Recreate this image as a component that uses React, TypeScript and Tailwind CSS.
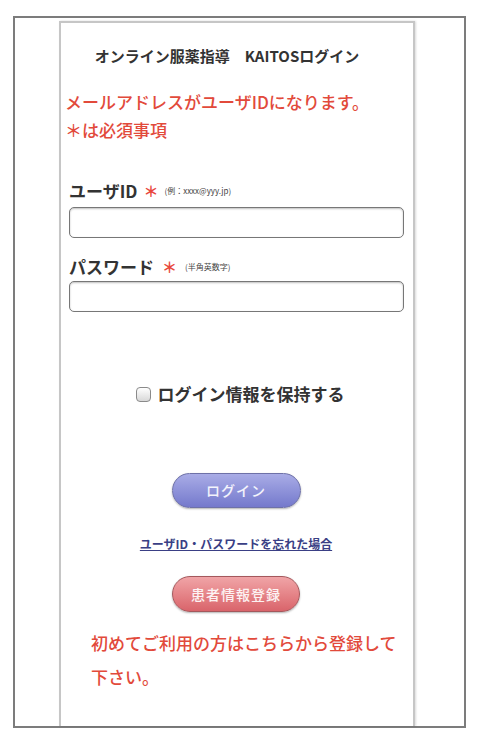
export default function App() {
  return (
    <div
      className="w-[479px] h-[739px] bg-white pt-[16px] px-[13px]"
      style={{ fontFamily: '"Noto Sans CJK JP", "Noto Sans", sans-serif' }}
    >
      <div className="h-[712px] border-2 border-[#7c7c7c] flex pl-[44px]">
        <div className="mt-[3px] w-[356px] border-2 border-b-0 border-[#c6c6c6] shadow-[1px_0_2px_rgba(0,0,0,0.15)] flex flex-col">
          <h1 className="mt-[23px] pr-[20px] text-center text-[15px] leading-[20px] font-bold text-[#333]">
            オンライン服薬指導　KAITOSログイン
          </h1>

          <div className="mt-[22px] pl-[4px] text-[17px] leading-[28px] font-medium text-[#e24a3b]">
            <p>メールアドレスがユーザIDになります。</p>
            <p>＊は必須事項</p>
          </div>

          <div className="px-[8px]">
            <label className="mt-[37px] flex items-center gap-[6px] leading-[20px]">
              <span className="text-[17px] font-bold text-[#333]">ユーザID</span>
              <span className="text-[15px] font-bold text-[#e8473c]">＊</span>
              <span className="text-[8px] text-[#444]">(例：xxxx@yyy.jp)</span>
            </label>
            <input className="mt-[6px] block w-[335px] h-[31px] rounded-[5px] border border-[#777] bg-white shadow-[inset_0_1px_2px_rgba(0,0,0,0.25)]" />

            <label className="mt-[19px] flex items-center gap-[8px] leading-[20px]">
              <span className="text-[17px] font-bold text-[#333]">パスワード</span>
              <span className="text-[15px] font-bold text-[#e8473c]">＊</span>
              <span className="text-[8px] text-[#444]">(半角英数字)</span>
            </label>
            <input type="password" className="mt-[4px] block w-[335px] h-[31px] rounded-[5px] border border-[#777] bg-white shadow-[inset_0_1px_2px_rgba(0,0,0,0.25)]" />
          </div>

          <label className="mt-[71px] flex items-center justify-center gap-[7px] leading-[22px] pl-[6px]">
            <span className="w-[15px] h-[15px] rounded-[4px] border border-[#8a8a8a] bg-gradient-to-b from-[#ffffff] to-[#d8d8d8]" />
            <span className="text-[17px] font-bold text-[#333]">ログイン情報を保持する</span>
          </label>

          <div className="mt-[68px] flex justify-center pr-[2px]">
            <button className="w-[129px] h-[35px] rounded-full border border-[#6e71a8] bg-gradient-to-b from-[#a9ace6] to-[#7579cc] text-white/90 text-[14px] font-medium tracking-[1px] shadow-[0_1px_2px_rgba(0,0,0,0.3)]">
              ログイン
            </button>
          </div>

          <a className="mt-[28px] block text-center text-[12px] leading-[16px] font-bold text-[#3a3f85] underline pr-[2px]">
            ユーザID・パスワードを忘れた場合
          </a>

          <div className="mt-[24px] flex justify-center pr-[2px]">
            <button className="w-[128px] h-[36px] rounded-full border border-[#a4585c] bg-gradient-to-b from-[#f0a4a7] to-[#d9646b] text-white/90 text-[14px] font-medium tracking-[1px] shadow-[0_1px_2px_rgba(0,0,0,0.3)]">
              患者情報登録
            </button>
          </div>

          <div className="mt-[14px] pl-[30px] text-[17px] leading-[34px] font-medium text-[#e24a3b]">
            <p>初めてご利用の方はこちらから登録して</p>
            <p>下さい。</p>
          </div>
        </div>
      </div>
    </div>
  );
}
